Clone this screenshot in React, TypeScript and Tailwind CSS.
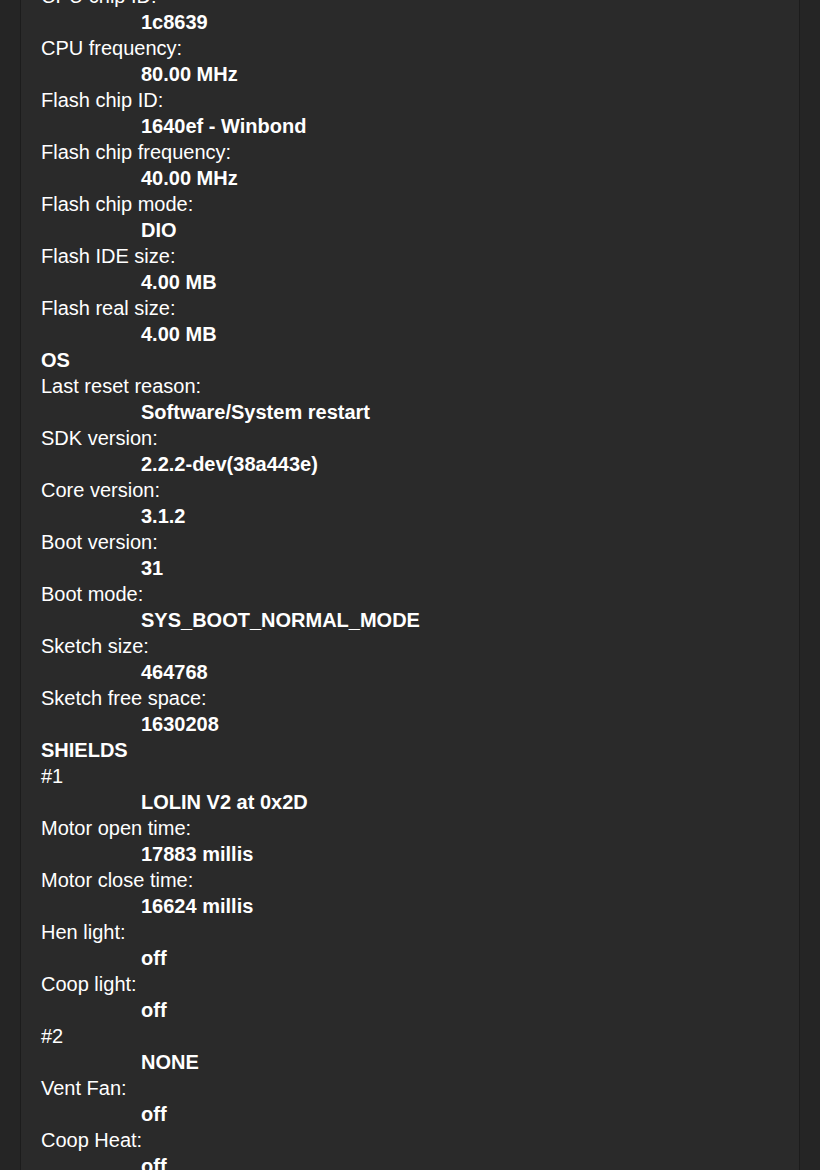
type Row = { kind: 'label' | 'value' | 'head'; text: string };

const rows: Row[] = [
  { kind: 'label', text: 'CPU chip ID:' },
  { kind: 'value', text: '1c8639' },
  { kind: 'label', text: 'CPU frequency:' },
  { kind: 'value', text: '80.00 MHz' },
  { kind: 'label', text: 'Flash chip ID:' },
  { kind: 'value', text: '1640ef - Winbond' },
  { kind: 'label', text: 'Flash chip frequency:' },
  { kind: 'value', text: '40.00 MHz' },
  { kind: 'label', text: 'Flash chip mode:' },
  { kind: 'value', text: 'DIO' },
  { kind: 'label', text: 'Flash IDE size:' },
  { kind: 'value', text: '4.00 MB' },
  { kind: 'label', text: 'Flash real size:' },
  { kind: 'value', text: '4.00 MB' },
  { kind: 'head', text: 'OS' },
  { kind: 'label', text: 'Last reset reason:' },
  { kind: 'value', text: 'Software/System restart' },
  { kind: 'label', text: 'SDK version:' },
  { kind: 'value', text: '2.2.2-dev(38a443e)' },
  { kind: 'label', text: 'Core version:' },
  { kind: 'value', text: '3.1.2' },
  { kind: 'label', text: 'Boot version:' },
  { kind: 'value', text: '31' },
  { kind: 'label', text: 'Boot mode:' },
  { kind: 'value', text: 'SYS_BOOT_NORMAL_MODE' },
  { kind: 'label', text: 'Sketch size:' },
  { kind: 'value', text: '464768' },
  { kind: 'label', text: 'Sketch free space:' },
  { kind: 'value', text: '1630208' },
  { kind: 'head', text: 'SHIELDS' },
  { kind: 'label', text: '#1' },
  { kind: 'value', text: 'LOLIN V2 at 0x2D' },
  { kind: 'label', text: 'Motor open time:' },
  { kind: 'value', text: '17883 millis' },
  { kind: 'label', text: 'Motor close time:' },
  { kind: 'value', text: '16624 millis' },
  { kind: 'label', text: 'Hen light:' },
  { kind: 'value', text: 'off' },
  { kind: 'label', text: 'Coop light:' },
  { kind: 'value', text: 'off' },
  { kind: 'label', text: '#2' },
  { kind: 'value', text: 'NONE' },
  { kind: 'label', text: 'Vent Fan:' },
  { kind: 'value', text: 'off' },
  { kind: 'label', text: 'Coop Heat:' },
  { kind: 'value', text: 'off' },
];

export default function App() {
  return (
    <div className="h-[1170px] overflow-hidden bg-[#252525] text-white font-['Liberation_Sans',Arial,sans-serif] text-[20px] leading-[26px]">
      <div className="mx-5 h-full flow-root border-x border-[#1c1c1c] bg-[#2a2a2a] pl-5">
        {/* device info list, scrolled part way down */}
        <dl className="-mt-[17px]">
          {rows.map((r, i) =>
            r.kind === 'value' ? (
              <dd key={i} className="pl-[100px] font-bold">{r.text}</dd>
            ) : r.kind === 'head' ? (
              <dt key={i} className="font-bold">{r.text}</dt>
            ) : (
              <dt key={i}>{r.text}</dt>
            )
          )}
        </dl>
      </div>
    </div>
  );
}
